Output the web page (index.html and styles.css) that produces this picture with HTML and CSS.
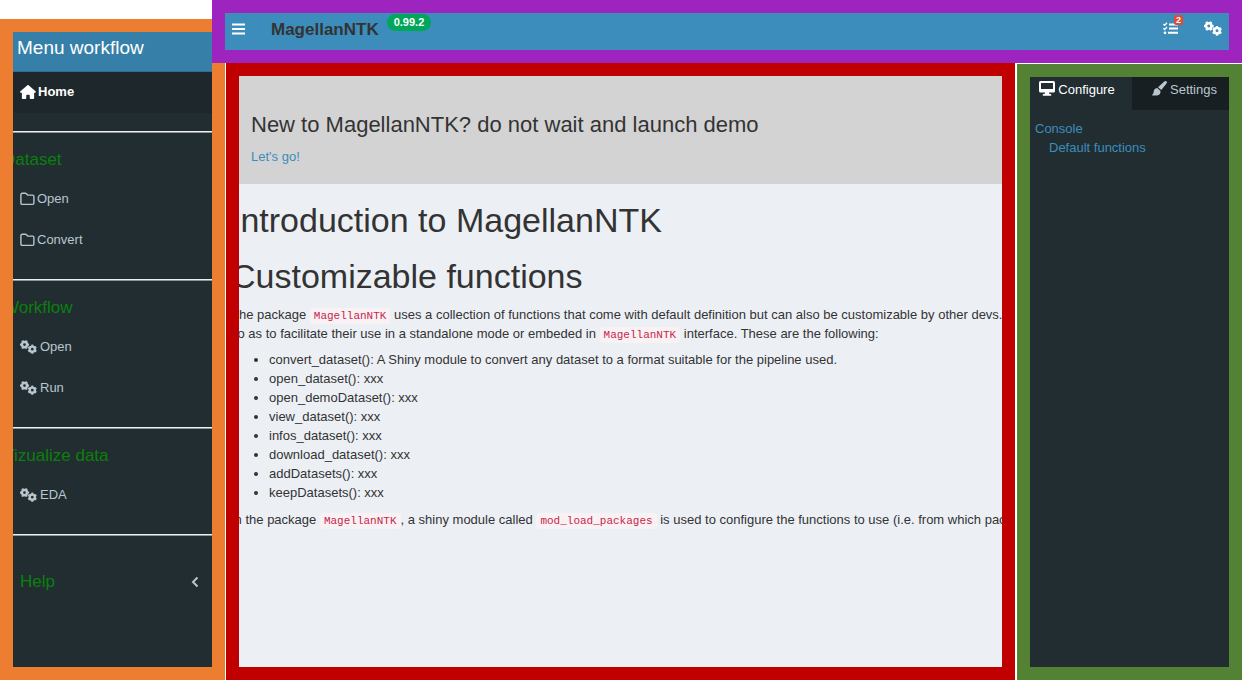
FILE: index.html
```html
<!DOCTYPE html>
<html lang="en">
<head>
<meta charset="utf-8">
<title>MagellanNTK</title>
<link rel="stylesheet" href="styles.css">
</head>
<body>
<svg class="sprite" aria-hidden="true">
  <symbol id="gears" viewBox="0 0 17 14">
    <g fill="none" stroke="currentColor">
      <circle cx="4.500" cy="4.600" r="2.600" stroke-width="2.400"/>
      <circle cx="4.500" cy="4.600" r="3.900" stroke-width="1.500" pathLength="24" stroke-dasharray="2 2" stroke-dashoffset="1"/>
      <circle cx="12.300" cy="9.200" r="2.600" stroke-width="2.400"/>
      <circle cx="12.300" cy="9.200" r="3.900" stroke-width="1.500" pathLength="24" stroke-dasharray="2 2" stroke-dashoffset="3"/>
    </g>
  </symbol>
  <symbol id="folder" viewBox="0 0 15 14">
    <path d="M2.2 1.3h3.3q.5 0 .9.4l1 1q.4.4 1 .4h4.2q1.3 0 1.3 1.3v6.7q0 1.3-1.3 1.3H2.2q-1.3 0-1.3-1.3V2.6q0-1.3 1.3-1.3z" fill="none" stroke="currentColor" stroke-width="1.4"/>
  </symbol>
</svg>
<div class="layout">
  <aside class="sidebar">
    <div class="brand">Menu workflow</div>
    <nav>
      <a class="item active" href="#home">
        <svg class="icon" width="16" height="14" viewBox="0 0 576 512"><path fill="currentColor" d="M575.8 255.5c0 18-15 32.1-32 32.1h-32l.7 160.2c0 2.7-.2 5.4-.5 8.1V472c0 22.1-17.9 40-40 40H392c-22.1 0-40-17.9-40-40v-88c0-17.700-14.300-32-32-32h-64c-17.700 0-32 14.300-32 32v88c0 22.100-17.900 40-40 40h-80c-22.100 0-40-17.900-40-40V287.600H32c-18 0-32-14-32-32.100 0-9 3-17 10-24L266.400 8c7-7 15-8 22-8s15 2 21 7l255.400 224.500c8 7 12 15 11 24z"/></svg>
        Home</a>
      <hr class="first">
      <h4>Dataset</h4>
      <a class="item" href="#open-dataset"><svg class="icon" width="15" height="14"><use href="#folder"/></svg>Open</a>
      <a class="item" href="#convert"><svg class="icon" width="15" height="14"><use href="#folder"/></svg>Convert</a>
      <hr>
      <h4>Workflow</h4>
      <a class="item" href="#open-workflow"><svg class="icon gears" width="17" height="14"><use href="#gears"/></svg>Open</a>
      <a class="item" href="#run"><svg class="icon gears" width="17" height="14"><use href="#gears"/></svg>Run</a>
      <hr>
      <h4>Vizualize data</h4>
      <a class="item" href="#eda"><svg class="icon gears" width="17" height="14"><use href="#gears"/></svg>EDA</a>
      <hr>
      <button class="help" type="button">Help
        <svg width="8" height="12" viewBox="0 0 8 12"><path d="M6.500 1.500L2 6l4.500 4.500" fill="none" stroke="currentColor" stroke-width="2"/></svg>
      </button>
    </nav>
  </aside>

  <header class="topbar">
    <button class="plain" type="button" aria-label="Toggle menu">
      <svg width="13" height="12" viewBox="0 0 13 12"><path d="M0 1.500h13M0 6h13M0 10.500h13" stroke="currentColor" stroke-width="2.200"/></svg>
    </button>
    <strong class="title">MagellanNTK</strong>
    <span class="version">0.99.2</span>
    <button class="plain tasks" type="button" aria-label="Tasks">
      <svg width="15" height="13" viewBox="0 0 15 13"><g fill="none" stroke="currentColor"><path d="M6 2.500h9M6 6.500h9M5 10.800h10" stroke-width="2"/><path d="M.400 2l1.300 1.300L4 .800M.400 6.200l1.300 1.300L4 5" stroke-width="1.300"/></g><circle cx="2" cy="10.800" r="1.400" fill="currentColor"/></svg>
      <span class="count">2</span>
    </button>
    <button class="plain" type="button" aria-label="Controls">
      <svg width="18" height="15"><use href="#gears"/></svg>
    </button>
  </header>

  <main class="main">
    <section class="banner">
      <h3>New to MagellanNTK? do not wait and launch demo</h3>
      <a href="#demo">Let's go!</a>
    </section>
    <article class="article">
      <h1>Introduction to MagellanNTK</h1>
      <h1>Customizable functions</h1>
      <p>The package <code>MagellanNTK</code> uses a collection of functions that come with default definition but can also be customizable by other devs.<br>
      so as to facilitate their use in a standalone mode or embeded in <code>MagellanNTK</code> interface. These are the following:</p>
      <ul>
        <li>convert_dataset(): A Shiny module to convert any dataset to a format suitable for the pipeline used.</li>
        <li>open_dataset(): xxx</li>
        <li>open_demoDataset(): xxx</li>
        <li>view_dataset(): xxx</li>
        <li>infos_dataset(): xxx</li>
        <li>download_dataset(): xxx</li>
        <li>addDatasets(): xxx</li>
        <li>keepDatasets(): xxx</li>
      </ul>
      <p>In the package <code>MagellanNTK</code>, a shiny module called <code>mod_load_packages</code> is used to configure the functions to use (i.e. from which pac</p>
    </article>
  </main>

  <aside class="controls">
    <div class="tabs" role="tablist">
      <button class="tab selected" type="button" role="tab" aria-selected="true">
        <svg width="16" height="15" viewBox="0 0 16 15"><path fill="currentColor" fill-rule="evenodd" d="M1.500 0h13Q16 0 16 1.500v8.500q0 1.500-1.500 1.500H10l.4 1.500H11.500q.8 0 .8.900t-.8.900h-7q-.8 0-.8-.900t.8-.900H5.600L6 11.500H1.500Q0 11.500 0 10V1.500Q0 0 1.500 0zM2 2v6h12V2z"/></svg>
        Configure</button>
      <button class="tab" type="button" role="tab" aria-selected="false">
        <svg width="15" height="15" viewBox="0 0 15 15"><path fill="currentColor" d="M14.600.400q.8.900-.1 2.100L9.300 9 6 6.200 12.300.600q1.400-1.100 2.300-.200zM5.200 7L8.500 9.900q.3 4.600-4.300 4.600H.800q-.8-.2-.5-1 1.200-.3 1.300-2.300Q1.800 7.500 5.200 7z"/></svg>
        Settings</button>
    </div>
    <div class="links">
      <a href="#console">Console</a>
      <a class="nested" href="#defaults">Default functions</a>
    </div>
  </aside>
</div>
</body>
</html>
```
FILE: styles.css
```css
* { box-sizing: border-box; }
body {
  margin: 0;
  background: #fff;
  color: #333;
  font: 13px/19px "Liberation Sans", Arial, sans-serif;
}
h1, h3, h4, p, ul { margin: 0; font-weight: 400; }
a { color: #3c8dbc; text-decoration: none; }
button { border: 0; padding: 0; background: none; font: inherit; color: inherit; cursor: pointer; }
svg { flex: none; display: block; }
.sprite { display: none; }

.layout {
  display: grid;
  grid-template-columns: 212px 14px minmax(0, 1fr) 2px 225px;
  grid-template-rows: auto 1fr;
  min-height: 100vh;
}

/* left menu */
.sidebar {
  grid-area: 1 / 1 / 3 / 3;
  margin: 19px 1px 0 0;
  border: 13px solid #ed7d31;
  background: #222d32;
  color: #b8c7ce;
  overflow: hidden;
}
.brand {
  height: 40px;
  padding: 0 4px;
  background: #367fa9;
  border-bottom: 1px solid #2f6f94;
  color: #fff;
  font-size: 19px;
  line-height: 32px;
}
.item {
  display: flex;
  align-items: center;
  gap: 2px;
  height: 41px;
  padding: 0 7px;
  color: #b8c7ce;
}
.gears { margin-right: 1px; }
.active { padding-bottom: 2px; background: #1e282c; color: #fff; font-weight: 700; }
.sidebar hr {
  height: 2px;
  margin: 19px 0 17px;
  border: 0;
  border-top: 1px solid #eee;
  border-bottom: 1px solid #8d9598;
}
.sidebar hr.first { margin-top: 18px; }
.sidebar h4 {
  margin-left: -10px;
  padding-bottom: 8px;
  color: #0a800a;
  font-size: 17px;
  line-height: 20px;
}
.help {
  display: flex;
  align-items: center;
  justify-content: space-between;
  width: 100%;
  margin-top: 36px;
  padding: 0 13px 0 7px;
  color: #0a800a;
  font-size: 17px;
  line-height: 20px;
}
.help svg { color: #b8c7ce; }

/* top bar */
.topbar {
  grid-area: 1 / 2 / 2 / 6;
  z-index: 1;
  display: flex;
  align-items: center;
  height: 63px;
  padding: 0 7px 6px;
  border: 13px solid #9e24bf;
  background: #3c8dbc;
  color: #fff;
}
.plain { position: relative; }
.title { margin-left: 26px; padding-top: 2px; color: #333; font-size: 17px; }
.version {
  align-self: flex-start;
  margin: 1px auto 0 8px;
  padding: 0 7px;
  border-radius: 9px;
  background: #00a65a;
  font-size: 11px;
  font-weight: 700;
  line-height: 17px;
}
.tasks { margin-right: 26px; }
.count {
  position: absolute;
  top: -7px;
  right: -5px;
  padding: 0 2px;
  border-radius: 2px;
  background: #dd4b39;
  font-size: 9px;
  font-weight: 700;
  line-height: 10px;
}

/* centre */
.main {
  grid-area: 2 / 3;
  border: 13px solid #c00000;
  background: #ecf0f5;
  overflow: hidden;
}
.banner {
  padding: 36px 12px 18px;
  background: #d3d3d3;
}
.banner h3 { margin-bottom: 9px; font-size: 22px; line-height: 26px; }
.article { margin-left: -8px; white-space: nowrap; }
.article h1 { margin-top: 18px; font-size: 34px; line-height: 38px; }
.article h1:first-child { margin-top: 17px; }
.article h1 + p { margin-top: 10px; }
code {
  padding: 2px 4px;
  border-radius: 4px;
  background: #f9f2f4;
  color: #c7254e;
  font: 11px "Liberation Mono", monospace;
}
.article ul { margin: 7px 0 8px; padding-left: 38px; }

/* right panel */
.controls {
  grid-area: 2 / 5;
  margin-top: 1px;
  border: 13px solid #548235;
  background: #222d32;
}
.tabs { display: flex; }
.tab {
  display: flex;
  justify-content: center;
  gap: 3px;
  flex: 1;
  height: 33px;
  padding: 4px 0;
  background: #181f23;
  color: #b8c7ce;
  line-height: 18px;
}
.selected { flex: none; width: 102px; padding-right: 8px; background: #222d32; color: #fff; }
.tab:not(.selected) { padding-left: 8px; }
.links { display: grid; padding: 9px 5px; }
.nested { padding-left: 14px; }
```
